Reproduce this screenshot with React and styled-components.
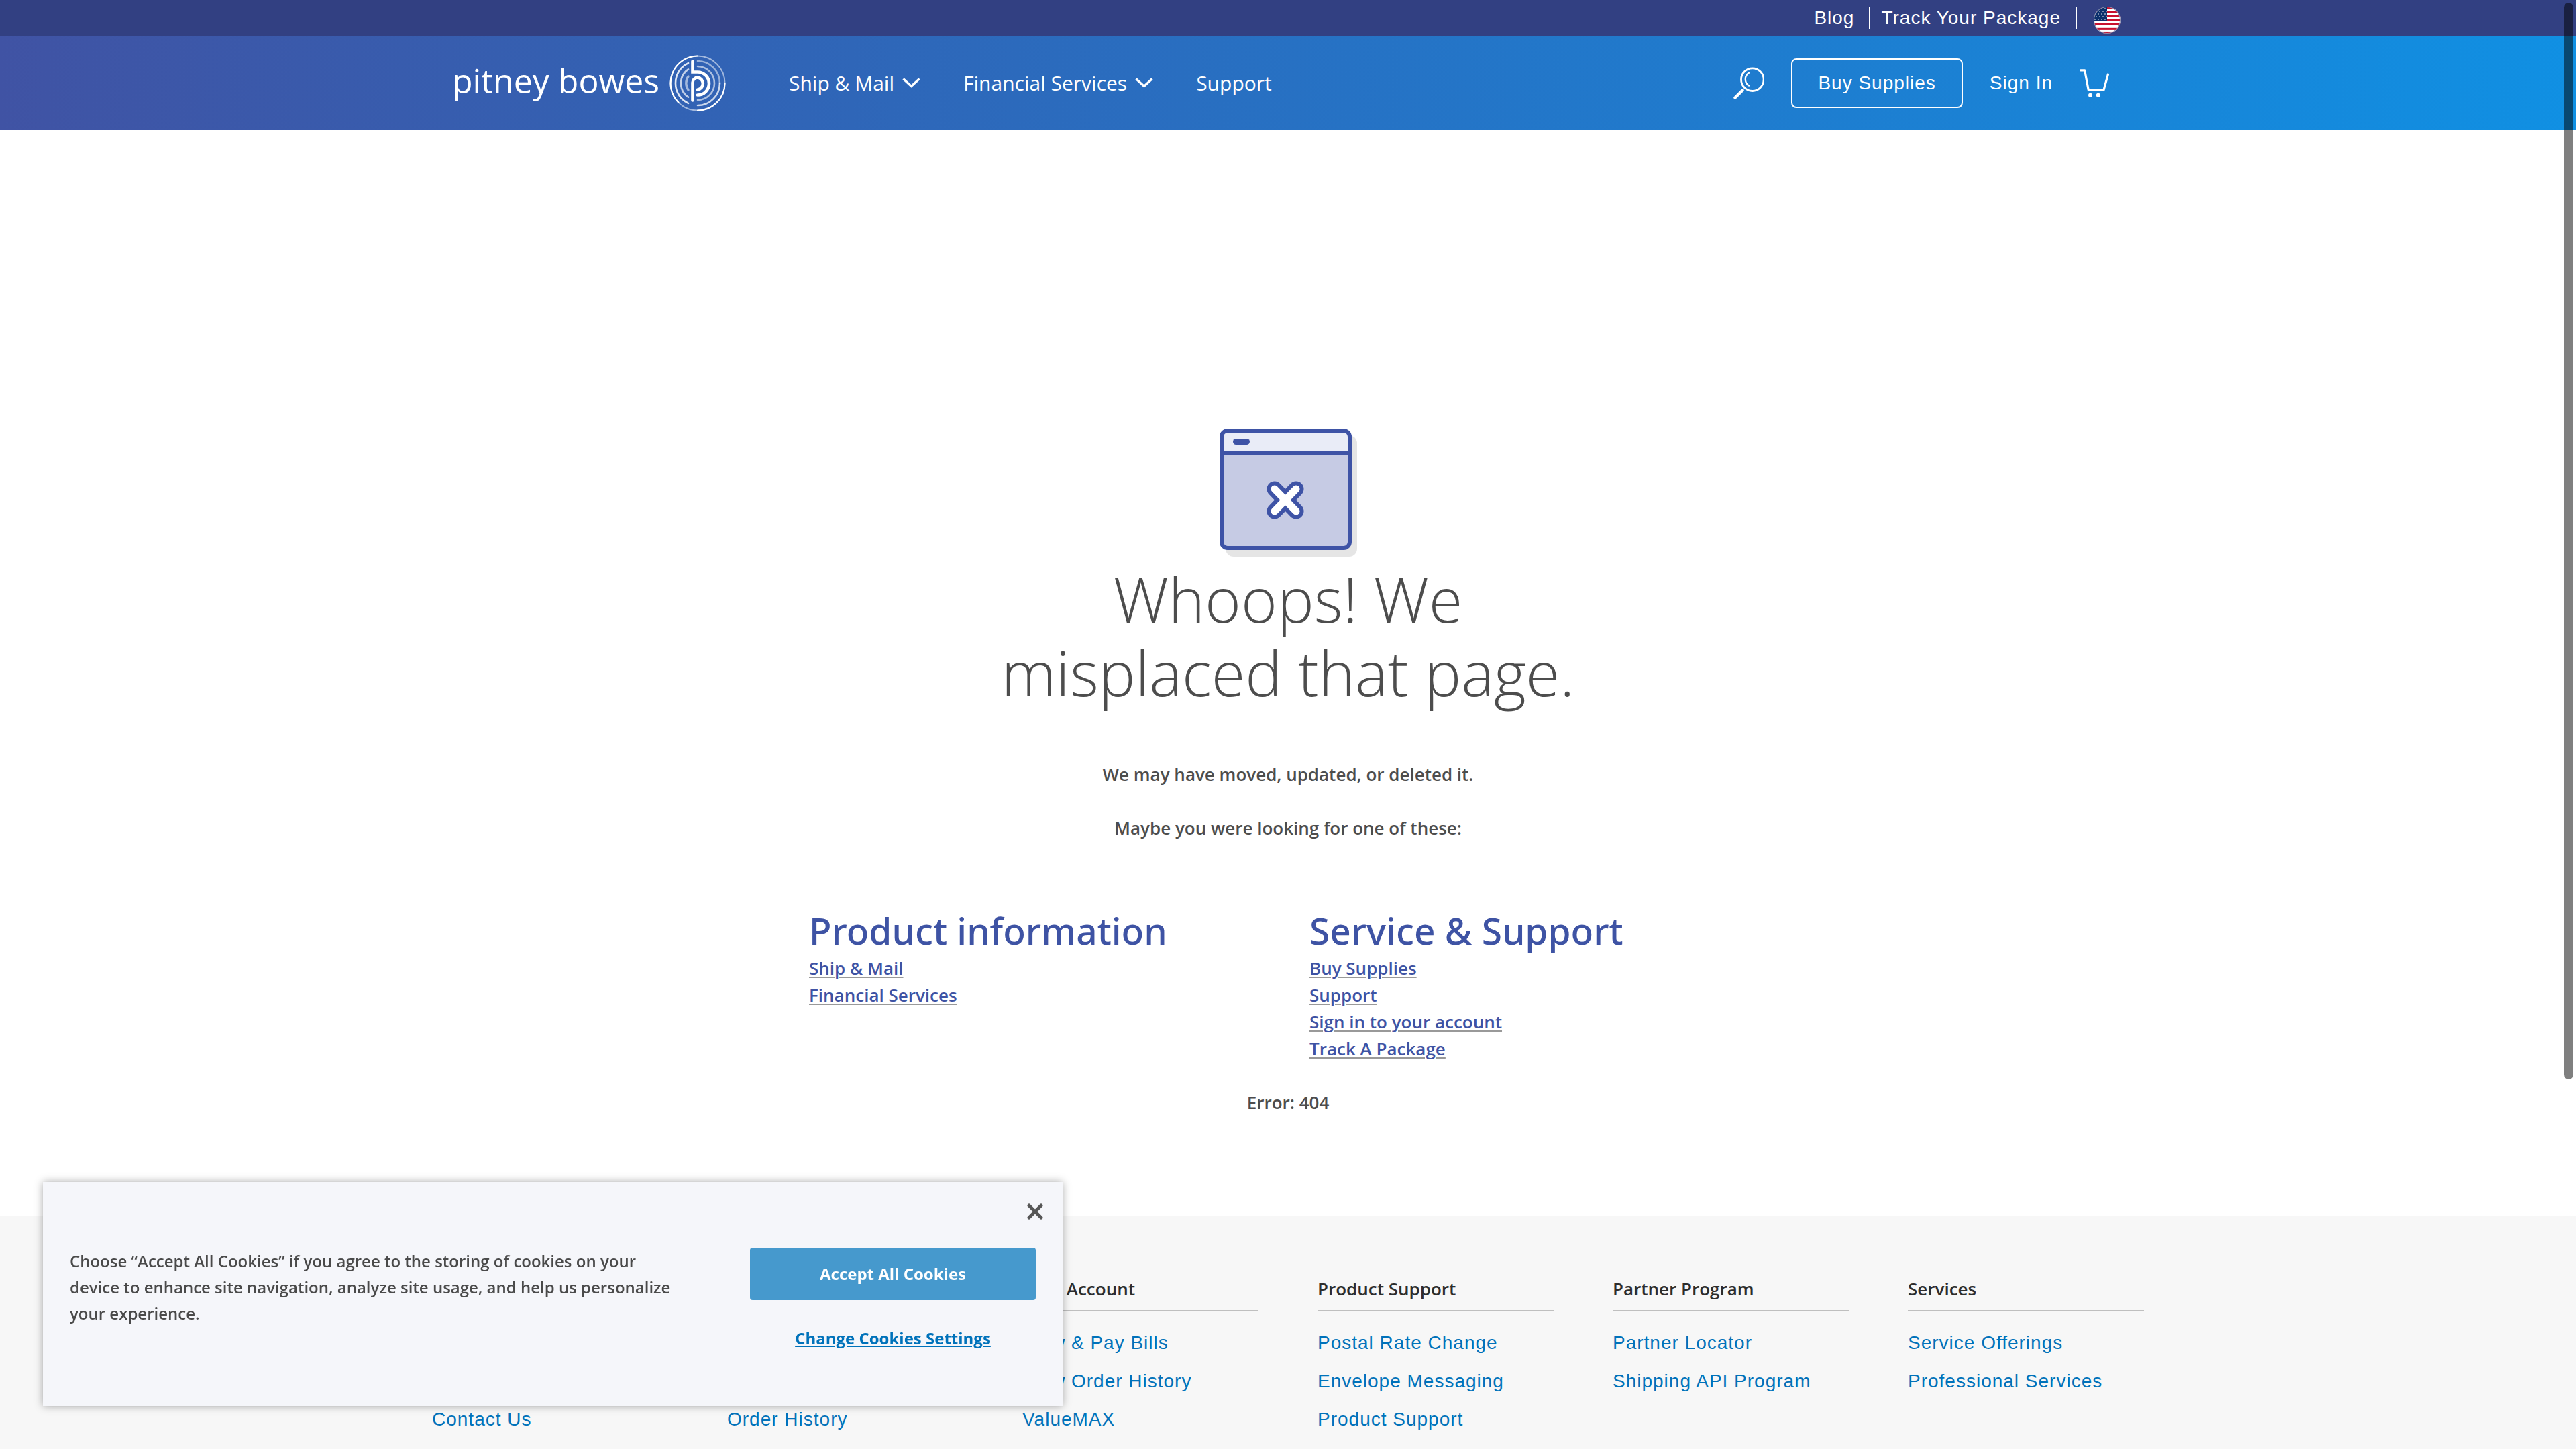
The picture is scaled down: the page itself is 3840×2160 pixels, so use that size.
import React from "react";
import styled, { createGlobalStyle } from "styled-components";

const brandFont = `"Open Sans", "Noto Sans", sans-serif`;
const displayFont = `"Noto Sans", "Open Sans", sans-serif`;
const plainFont = `"Liberation Sans", Arial, sans-serif`;

const GlobalStyle = createGlobalStyle`
  *, *::before, *::after { box-sizing: border-box; }
  body { margin: 0; background: #fff; color: #4d4d4d; font-family: ${brandFont}; }
  h1, h2, h3, p, ul { margin: 0; padding: 0; }
  ul { list-style: none; }
  a { color: inherit; text-decoration: none; }
  button { border: 0; padding: 0; background: none; color: inherit; font: inherit; cursor: pointer; }
  svg { display: block; }
`;

const Page = styled.div`
  display: flex;
  flex-direction: column;
  min-height: 100vh;
`;

const HeaderInner = styled.div`
  display: flex;
  align-items: center;
  width: 100%;
  max-width: 2492px;
  margin: 0 auto;
`;

const TopBar = styled.div`
  display: flex;
  height: 54px;
  background: #324082;
  color: #fff;
  font: 28px/32px ${plainFont};
  letter-spacing: 1px;
`;

const TopLinks = styled.ul`
  display: flex;
  gap: 16px;
  margin-left: auto;
`;

const TopItem = styled.li`
  padding-right: 22px;
  border-right: 2px solid #fff;
`;

const FlagButton = styled.button`
  padding: 5px 5px 0 25px;
`;

const NavBar = styled.header`
  display: flex;
  min-height: 140px;
  color: #fff;
  background: linear-gradient(90deg, #4053a4 0%, #2f66b8 33%, #1090e3 100%);
`;

const NavLinks = styled.nav`
  display: flex;
  gap: 64px;
  margin-left: 94px;
  font-size: 30px;
  line-height: 40px;
`;

const NavLink = styled.a`
  display: flex;
  align-items: center;
  gap: 12px;
`;

const NavMenu = styled(NavLink).attrs({ as: "button", type: "button" })``;

const NavActions = styled.div`
  display: flex;
  align-items: center;
  gap: 40px;
  margin-left: auto;
  padding-right: 22px;
  font-family: ${plainFont};
  font-size: 28px;
  line-height: 32px;
  letter-spacing: 1px;
`;

const OutlineLink = styled.a`
  display: flex;
  align-items: center;
  height: 74px;
  padding: 0 38px;
  border: 2px solid #fff;
  border-radius: 8px;
`;

const Main = styled.main`
  display: flex;
  flex-direction: column;
  align-items: center;
  padding: 444px 64px 150px;
  font-size: 26px;
  font-weight: 600;
  line-height: 40px;
`;

const Title = styled.h1`
  max-width: 900px;
  margin: 8px 0 76px;
  font-size: 92px;
  font-weight: 300;
  line-height: 110px;
  text-align: center;
`;

const Messages = styled.div`
  display: grid;
  gap: 40px;
  margin-bottom: 97px;
  text-align: center;
`;

const Suggestions = styled.div`
  display: grid;
  grid-template-columns: 1fr 1fr;
  column-gap: 64px;
  width: 100%;
  max-width: 1428px;
  margin-bottom: 40px;
  color: #3e53a4;
`;

const SuggestionTitle = styled.h2`
  font-family: ${displayFont};
  font-size: 55px;
  font-weight: 500;
  line-height: 72px;
`;

const SuggestionLink = styled.a`
  text-decoration: underline 2px #999;
  text-underline-offset: 3px;
`;

const Footer = styled.footer`
  flex: 1;
  padding: 88px 64px 16px;
  background: #f7f7f7;
`;

const FooterGrid = styled.div`
  display: grid;
  grid-template-columns: repeat(6, 1fr);
  column-gap: 88px;
  max-width: 2552px;
  margin: 0 auto;
`;

const FooterTitle = styled.h3`
  margin-bottom: 18px;
  padding-bottom: 12px;
  border-bottom: 2px solid #bfbfbf;
  color: #2d2d2d;
  font-size: 26px;
  font-weight: 600;
  line-height: 40px;
`;

const FooterList = styled.ul`
  color: #0072ba;
  font: 28px/57px ${plainFont};
  letter-spacing: 1px;
  white-space: nowrap;
`;

const CookieDialog = styled.section`
  position: fixed;
  left: 64px;
  bottom: 64px;
  display: grid;
  grid-template-columns: 1fr 426px;
  column-gap: 106px;
  width: 1520px;
  min-height: 334px;
  padding: 98px 40px 80px;
  background: #f5f6fa;
  box-shadow: 0 0 12px rgba(0, 0, 0, 0.35);
  color: #4a4a4a;
  font-size: 24px;
  font-weight: 600;
  line-height: 39px;
`;

const CookieActions = styled.div`
  display: flex;
  flex-direction: column;
  align-items: center;
  gap: 37px;
  font-weight: 700;
`;

const AcceptButton = styled.button`
  width: 100%;
  height: 78px;
  padding-bottom: 2px;
  border-radius: 4px;
  background: #4699cd;
  color: #fff;
`;

const SettingsButton = styled.button`
  color: #0072ba;
  text-decoration: underline 2px;
  text-underline-offset: 2px;
`;

const CloseButton = styled.button`
  position: absolute;
  top: 32px;
  right: 29px;
`;

const ScrollThumb = styled.div`
  position: fixed;
  top: 4px;
  right: 4px;
  width: 14px;
  height: 1605px;
  border-radius: 7px;
  background: rgba(0, 0, 0, 0.5);
`;

const Logo = () => (
  <svg width="408" height="84" viewBox="0 0 408 84" role="img" aria-label="Pitney Bowes">
    <text x="0" y="57" fill="#fff" fontSize="50">pitney bowes</text>
    <g transform="translate(366 42)" fill="none" stroke="#fff" strokeWidth="2.6" strokeLinecap="round">
      <circle r="40.5" opacity="0.55" strokeWidth="2" />
      <path d="M0 -40.5 A40.5 40.5 0 0 0 -28.6 28.6" strokeWidth="2.2" />
      <path d="M0 40.5 A40.5 40.5 0 0 0 40.5 0" strokeWidth="2.2" />
      <path d="M-14 -29.9 A33 33 0 0 0 -14 29.9" opacity="0.85" />
      <path d="M-14 -20.7 A25 25 0 0 0 -14 20.7" opacity="0.7" />
      <path d="M-14 -10 A17.2 17.2 0 0 0 -14 10" opacity="0.55" strokeWidth="3.4" />
      <path d="M0 -33 A33 33 0 0 1 33 0" opacity="0.5" />
      <path d="M33 0 A33 33 0 0 1 0 33" opacity="0.75" />
      <path d="M0 -25 A25 25 0 0 1 0 25" opacity="0.6" />
      <path d="M-7.5 -32.5 V-16.5 H0 A16.8 16.8 0 0 1 0 17.5" strokeWidth="4.6" />
      <path d="M-7.5 25.5 V-1 A8 8 0 0 1 0 -8.6 A9.2 9.2 0 0 1 0 9.6" strokeWidth="4.6" />
    </g>
  </svg>
);

const Chevron = () => (
  <svg width="27" height="16" viewBox="0 0 27 16" fill="none" stroke="#fff" strokeWidth="3.4" aria-hidden="true">
    <path d="M1.5 1.5 L13.5 12.5 L25.5 1.5" />
  </svg>
);

const SearchIcon = () => (
  <svg width="46" height="48" viewBox="0 0 46 48" fill="none" stroke="#fff" strokeLinecap="round" aria-hidden="true">
    <circle cx="28.3" cy="18.7" r="16.8" strokeWidth="2.8" />
    <path d="M23 8.8 A11 11 0 0 0 23 27.5" strokeWidth="2.4" />
    <path d="M13.5 34.5 L2.5 45.5" strokeWidth="4.4" />
  </svg>
);

const CartIcon = () => (
  <svg width="44" height="42" viewBox="0 0 44 42" aria-hidden="true">
    <path d="M1.5 1.8 H7.6 L13.2 31 H36 L42.4 8" fill="none" stroke="#fff" strokeWidth="3.2" strokeLinecap="round" strokeLinejoin="round" />
    <circle cx="16" cy="38.7" r="3" fill="#fff" />
    <circle cx="27.8" cy="38.7" r="3" fill="#fff" />
  </svg>
);

const FlagIcon = () => (
  <svg width="40" height="40" viewBox="0 0 40 40" aria-hidden="true">
    <clipPath id="flag-round"><circle cx="20" cy="20" r="20" /></clipPath>
    <g clipPath="url(#flag-round)">
      <rect width="40" height="40" fill="#fff" />
      {[0, 1, 2, 3, 4, 5, 6].map((n) => (
        <rect key={n} y={n * 6.16} width="40" height="3.08" fill="#c8102e" />
      ))}
      <rect width="20" height="21.5" fill="#0a2f6b" />
      {[3, 7, 11, 15, 19].map((y, row) =>
        [2, 7, 12, 17].map((x) => (
          <circle key={`${x}-${y}`} cx={x + (row % 2 ? 2 : 0)} cy={y} r="0.8" fill="#fff" />
        ))
      )}
    </g>
    <circle cx="20" cy="20" r="19.5" fill="none" stroke="#8b8fae" />
  </svg>
);

const BrokenWindow = () => (
  <svg width="206" height="192" viewBox="0 0 206 192" aria-hidden="true">
    <rect x="10" y="11" width="196" height="181" rx="12" fill="#e5e5e5" />
    <rect x="4" y="4" width="191" height="175" rx="9" fill="#c6cbe4" />
    <path d="M4 37 V13 A9 9 0 0 1 13 4 H186 A9 9 0 0 1 195 13 V37 Z" fill="#e9ecf7" />
    <path d="M1 37.5 H198" stroke="#3e53a6" strokeWidth="6" />
    <rect x="4" y="4" width="191" height="175" rx="9" fill="none" stroke="#3e53a6" strokeWidth="6" />
    <rect x="21" y="16" width="25" height="9" rx="4.5" fill="#3e53a6" />
    <path d="M83 91 L115 124 M115 91 L83 124" stroke="#3e53a6" strokeWidth="23" strokeLinecap="round" />
    <path d="M83 91 L115 124 M115 91 L83 124" stroke="#fff" strokeWidth="11" strokeLinecap="round" />
  </svg>
);

const CloseIcon = () => (
  <svg width="24" height="24" viewBox="0 0 24 24" stroke="#565656" strokeWidth="5" strokeLinecap="round" aria-hidden="true">
    <path d="M3 3 L21 21 M21 3 L3 21" />
  </svg>
);

const suggestions = [
  { title: "Product information", links: ["Ship & Mail", "Financial Services"] },
  { title: "Service & Support", links: ["Buy Supplies", "Support", "Sign in to your account", "Track A Package"] },
];

const footerColumns = [
  { title: "Company", links: ["About Us", "Careers", "Contact Us"] },
  { title: "Shop", links: ["Supplies", "Products", "Order History"] },
  { title: "Your Account", links: ["View & Pay Bills", "View Order History", "ValueMAX"] },
  { title: "Product Support", links: ["Postal Rate Change", "Envelope Messaging", "Product Support"] },
  { title: "Partner Program", links: ["Partner Locator", "Shipping API Program"] },
  { title: "Services", links: ["Service Offerings", "Professional Services"] },
];

export default function App() {
  return (
    <Page>
      <GlobalStyle />
      <TopBar>
        <HeaderInner>
          <TopLinks>
            <TopItem><a href="#blog">Blog</a></TopItem>
            <TopItem><a href="#track">Track Your Package</a></TopItem>
          </TopLinks>
          <FlagButton type="button" aria-label="Choose country"><FlagIcon /></FlagButton>
        </HeaderInner>
      </TopBar>
      <NavBar>
        <HeaderInner>
          <a href="#home"><Logo /></a>
          <NavLinks>
            <NavMenu>Ship &amp; Mail <Chevron /></NavMenu>
            <NavMenu>Financial Services <Chevron /></NavMenu>
            <NavLink href="#support">Support</NavLink>
          </NavLinks>
          <NavActions>
            <button type="button" aria-label="Search"><SearchIcon /></button>
            <OutlineLink href="#supplies">Buy Supplies</OutlineLink>
            <a href="#signin">Sign In</a>
            <a href="#cart" aria-label="Cart"><CartIcon /></a>
          </NavActions>
        </HeaderInner>
      </NavBar>

      <Main>
        <BrokenWindow />
        <Title>Whoops! We misplaced that page.</Title>
        <Messages>
          <p>We may have moved, updated, or deleted it.</p>
          <p>Maybe you were looking for one of these:</p>
        </Messages>
        <Suggestions>
          {suggestions.map(({ title, links }) => (
            <section key={title}>
              <SuggestionTitle>{title}</SuggestionTitle>
              <ul>
                {links.map((link) => (
                  <li key={link}><SuggestionLink href="#page">{link}</SuggestionLink></li>
                ))}
              </ul>
            </section>
          ))}
        </Suggestions>
        <p>Error: 404</p>
      </Main>

      <Footer>
        <FooterGrid>
          {footerColumns.map(({ title, links }) => (
            <section key={title}>
              <FooterTitle>{title}</FooterTitle>
              <FooterList>
                {links.map((link) => (
                  <li key={link}><a href="#page">{link}</a></li>
                ))}
              </FooterList>
            </section>
          ))}
        </FooterGrid>
      </Footer>

      <CookieDialog aria-label="Cookies">
        <p>
          Choose “Accept All Cookies” if you agree to the storing of cookies on your device to enhance
          site navigation, analyze site usage, and help us personalize your experience.
        </p>
        <CookieActions>
          <AcceptButton type="button">Accept All Cookies</AcceptButton>
          <SettingsButton type="button">Change Cookies Settings</SettingsButton>
        </CookieActions>
        <CloseButton type="button" aria-label="Close"><CloseIcon /></CloseButton>
      </CookieDialog>
      <ScrollThumb aria-hidden="true" />
    </Page>
  );
}
